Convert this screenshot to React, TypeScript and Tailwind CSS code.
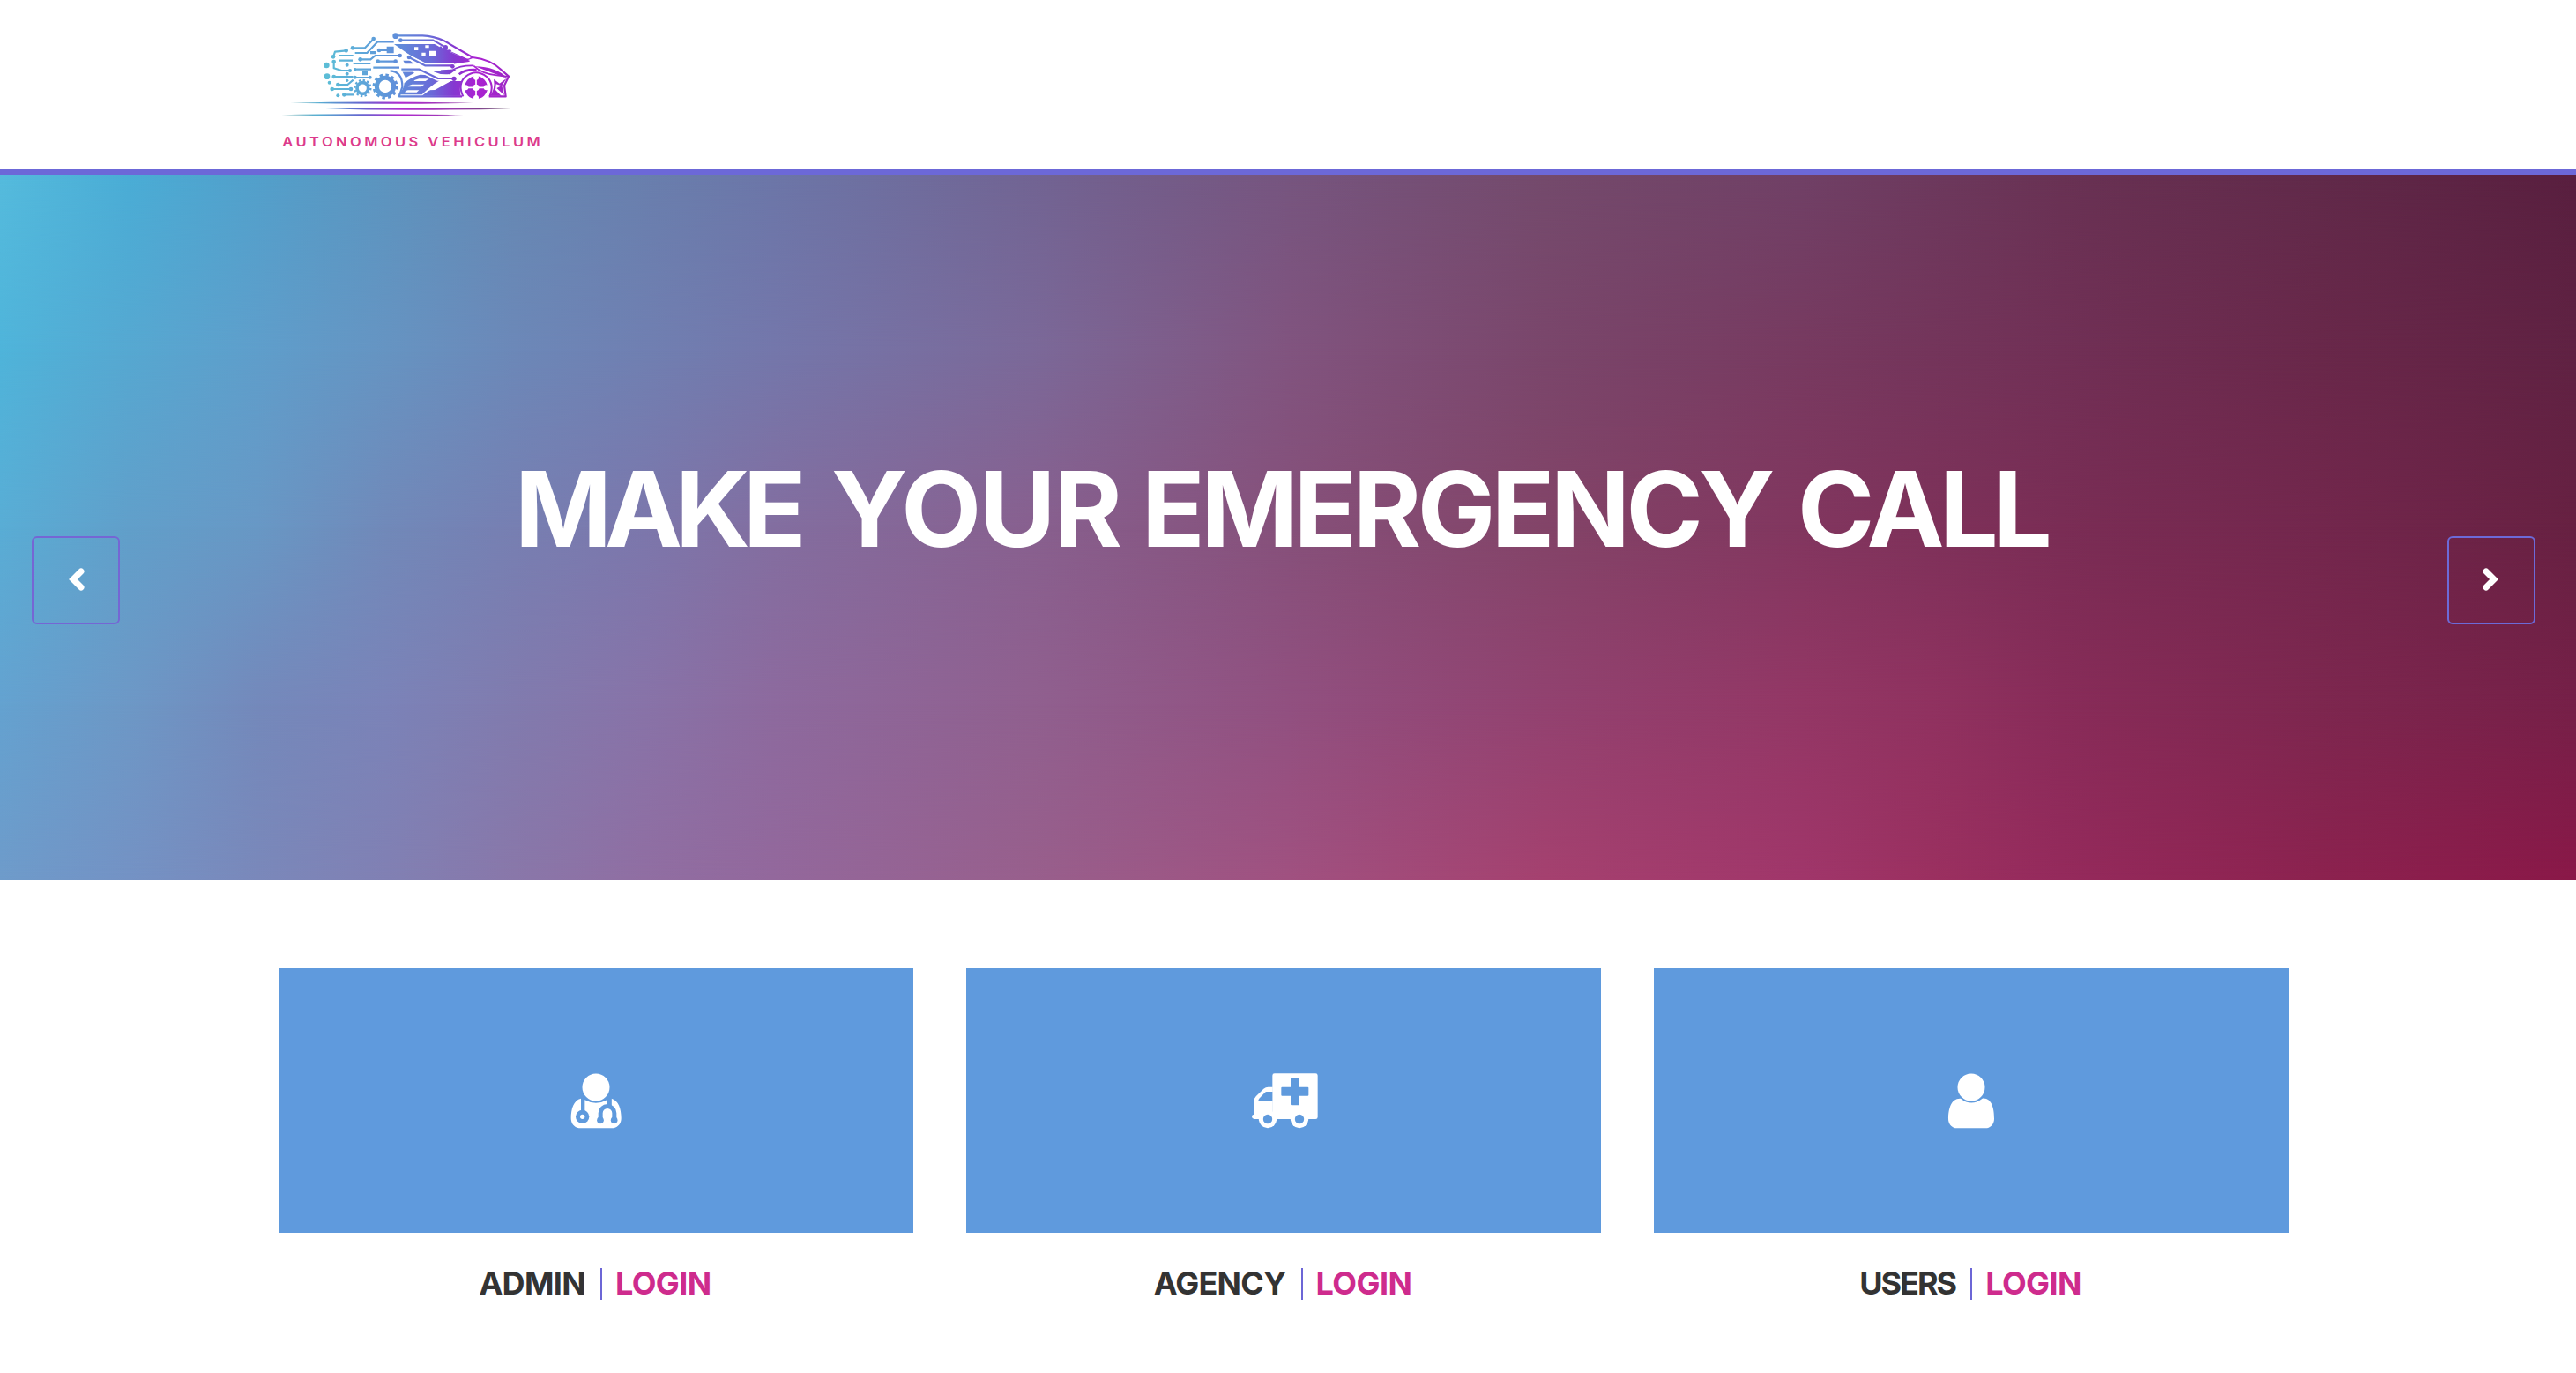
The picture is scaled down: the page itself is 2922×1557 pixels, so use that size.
import React from "react";

function Logo() {
  const g = "url(#car)";
  return (
    <svg width="330" height="172" viewBox="0 0 990 516" role="img" aria-label="Autonomous Vehiculum">
      <defs>
        <linearGradient id="car" gradientUnits="userSpaceOnUse" x1="200" y1="0" x2="835" y2="0">
          <stop offset="0" stopColor="#5cbfd6" />
          <stop offset="0.2" stopColor="#5da8d9" />
          <stop offset="0.4" stopColor="#5f8dda" />
          <stop offset="0.58" stopColor="#6a6ad8" />
          <stop offset="0.7" stopColor="#8538d0" />
          <stop offset="0.82" stopColor="#ab22d2" />
          <stop offset="1" stopColor="#9c26c4" />
        </linearGradient>
        <linearGradient id="speed" gradientUnits="userSpaceOnUse" x1="60" y1="0" x2="840" y2="0">
          <stop offset="0" stopColor="#7fb7b9" />
          <stop offset="0.16" stopColor="#58aed2" />
          <stop offset="0.34" stopColor="#6467cf" />
          <stop offset="0.52" stopColor="#b02bd0" />
          <stop offset="0.75" stopColor="#9a3cae" />
          <stop offset="1" stopColor="#59405f" />
        </linearGradient>
      </defs>
      <g fill={g}>
        <path d="M441 90H592L634 118L690 143Q704 146 696 150L640 158H552L496 128Z" />
        <path d="M472 146H496L508 157H478z" />
        <path d="M468 181H500L510 188L480 205Z" />
        <path d="M476 222Q496 204 530 194L560 196L596 214Q566 232 536 262H456Q474 245 476 222Z" />
        <path d="M560 248L634 216H670Q662 240 668 266H535Z" />
        <path d="M575 184Q610 176 652 177L632 192Q600 196 575 184Z" />
        <path d="M716 166Q790 168 824 204L812 202Q770 186 716 166Z" />
      </g>
      <g fill="none" stroke="#fff" strokeWidth="17" strokeLinejoin="round">
        <path d="M484 131L546 163H645M460 176H527L590 207H650M463 77H574L616 101" />
      </g>
      <g fill="none" stroke={g} strokeWidth="6.5" strokeLinejoin="round">
        <path d="M446 61H538Q575 62 612 79L708 135Q770 142 806 178L831 200L816 231L821 268H764" />
        <path d="M463 77H574L616 101" />
        <path d="M371 73L342 103H300" />
        <path d="M440 82H385L349 120H308" />
        <path d="M278 112L240 116L234 134" />
        <path d="M390 111H420M326 142H361L377 129H461M386 149H450M370 170H459" />
        <path d="M252 129H302M252 146H300M302 156H361M304 176H363" />
        <path d="M236 150V172L262 180H291M236 201H302M308 204H362M250 228H283L302 212M230 243H294M271 262H303" />
        <path d="M492 135L546 163H640M466 176H527L590 207H645" />
        <path d="M428 181Q470 184 469 236L458 268H672" />
        <path d="M600 181L640 178Q664 162 712 163" strokeWidth="5" />
        <path d="M712 164Q740 192 790 196Q816 200 830 200" strokeWidth="5" />
        <path d="M662 193Q684 175 722 178" strokeWidth="8" />
        <path d="M598 98Q606 116 630 112L690 142L708 135" />
      </g>
      <g fill={g}>
        <circle cx="446" cy="62" r="10" />
        <circle cx="463" cy="77" r="7" />
        <circle cx="616" cy="101" r="8" />
        <circle cx="371" cy="72" r="7" />
        <circle cx="300" cy="103" r="7" />
        <circle cx="278" cy="112" r="7" />
        <circle cx="390" cy="111" r="7" />
        <circle cx="234" cy="133" r="7" />
        <circle cx="326" cy="142" r="7" />
        <circle cx="461" cy="129" r="7" />
        <circle cx="386" cy="149" r="7" />
        <circle cx="446" cy="149" r="7" />
        <circle cx="236" cy="150" r="7" />
        <circle cx="211" cy="162" r="10" />
        <circle cx="213" cy="200" r="10" />
        <circle cx="281" cy="161" r="6" />
        <circle cx="281" cy="191" r="6" />
        <circle cx="281" cy="214" r="5" />
        <circle cx="291" cy="180" r="6" />
        <circle cx="236" cy="201" r="7" />
        <circle cx="308" cy="203" r="6" />
        <circle cx="359" cy="203" r="6" />
        <circle cx="221" cy="221" r="6" />
        <circle cx="250" cy="228" r="7" />
        <circle cx="230" cy="243" r="7" />
        <circle cx="294" cy="243" r="7" />
        <circle cx="250" cy="265" r="6" />
        <circle cx="271" cy="262" r="7" />
        <circle cx="308" cy="176" r="5" />
        <circle cx="492" cy="135" r="7" />
        <circle cx="640" cy="166" r="7" />
        <circle cx="645" cy="208" r="8" />
        <path d="M416 98H440V121H416zM360 114H378V124H360zM333 182H351V196H333z" />
        <path d="M780 209L800 224L824 206L808 232L816 264L790 240L806 232L788 226L786 246L806 266H768Q786 240 780 209Z" />
      </g>
      <g fill="#fff">
        <path d="M510 100H523V111H510zM547 94H560V103H547zM535 119H548V130H535zM561 113H585V132H561z" />
        <path d="M638 110L702 135Q696 141 688 139L634 115Z" />
        <path d="M512 212L526 208H560L548 216H508zM492 231L502 227H544L534 235H488zM480 250L488 247H526L518 254H478z" />
        <path d="M556 247L620 210L634 216L580 246Z" />
      </g>
      <g fill="none" stroke={g}>
        <circle cx="411" cy="234" r="29" strokeWidth="15" />
        <circle cx="411" cy="234" r="39" strokeWidth="9" strokeDasharray="10.4 10.02" />
        <circle cx="334" cy="240" r="19" strokeWidth="11" />
        <circle cx="334" cy="240" r="27" strokeWidth="7" strokeDasharray="7.1 7.04" />
      </g>
      <circle cx="720" cy="238" r="52" fill="#fff" />
      <path d="M676 268Q656 226 684 201Q720 172 756 201Q784 226 766 268" fill="none" stroke={g} strokeWidth="6" />
      <circle cx="720" cy="238" r="39" fill={g} />
      <path d="M720 198V278M680 238H760" stroke="#fff" strokeWidth="5" />
      <g fill="#fff">
        <circle cx="720" cy="203" r="9" />
        <circle cx="720" cy="273" r="9" />
        <circle cx="685" cy="238" r="9" />
        <circle cx="755" cy="238" r="9" />
        <circle cx="720" cy="238" r="11" />
      </g>
      <g fill="url(#speed)">
        <path d="M88 290Q240 286 400 286.500T710 290Q560 294 400 293.500T88 290Z" />
        <path d="M208 310Q380 306 520 306.500T840 310.500Q680 314 520 314.500T208 310Z" />
        <path d="M58 331Q200 327.500 360 328T678 331Q520 334.500 360 334.500T58 331Z" />
      </g>
      <text
        transform="translate(61 438) scale(1.15 1)"
        textLength="763"
        lengthAdjust="spacing"
        fill="#dc3a8c"
        fontFamily="Inter, sans-serif"
        fontSize="43"
        fontWeight="600"
      >
        AUTONOMOUS VEHICULUM
      </text>
    </svg>
  );
}

function Person() {
  return (
    <g fill="#fff">
      <circle cx="228" cy="159" r="46.500" />
      <path d="M192 197Q228 226 266 197C298 194 306 232 306 266C306 285 293 298 277 298H179C163 298 150 285 150 266C150 232 160 195 192 197Z" />
    </g>
  );
}

function Doctor() {
  return (
    <g>
      <g fill="#fff">
        <circle cx="228" cy="159" r="46.500" />
        <path d="M177 197L190 202Q228 223 266 202L281 197C305 204 314 232 314 264C314 285 300 298 281 298H176C157 298 143 285 143 264C143 232 152 203 177 197Z" />
      </g>
      <g fill="none" stroke="#5f9add">
        <path d="M183.500 192V245" strokeWidth="13" />
        <path d="M274 192V226" strokeWidth="15" />
        <path d="M243.500 270V247a23.500 23.500 0 0 1 47 0V270" strokeWidth="15" />
      </g>
      <g fill="#5f9add">
        <circle cx="182" cy="259" r="23" />
        <circle cx="243" cy="271" r="11.500" />
        <circle cx="290" cy="271" r="11.500" />
      </g>
      <circle cx="182" cy="259" r="8" fill="#fff" />
    </g>
  );
}

function Ambulance() {
  return (
    <g>
      <g fill="#fff">
        <rect x="190" y="112" width="154" height="155" rx="7" />
        <path d="M191 158H176Q167 158 160 164L134 190Q127 197 127 207V251Q120 252 120 259T128 267H191Z" />
        <circle cx="174" cy="267" r="30.500" />
        <circle cx="282" cy="267" r="30.500" />
      </g>
      <g fill="#5f9add">
        <rect x="252" y="127" width="30" height="93" rx="3" />
        <rect x="220" y="158" width="93" height="30" rx="3" />
        <path d="M190 174H170Q167 174 165 176L145 197Q142 200 142 205H190Z" />
        <circle cx="174" cy="267" r="15.500" />
        <circle cx="282" cy="267" r="15.500" />
      </g>
    </g>
  );
}

function Arrow({ points, label, side }: { points: string; label: string; side: string }) {
  return (
    <button
      aria-label={label}
      className={`absolute top-[410px] size-[100px] rounded-[6px] border-2 ${side}`}
    >
      <svg className="-m-0.5" width="100" height="100" viewBox="0 0 100 100" fill="none">
        <polyline points={points} stroke="#fff" strokeWidth="7" strokeLinecap="round" />
      </svg>
    </button>
  );
}

function Card({ name, icon, nameClass }: { name: string; icon: React.ReactNode; nameClass: string }) {
  return (
    <article className="w-[720px]">
      <div className="flex h-[300px] items-center justify-center bg-[#5f9add]">
        <svg className="mt-0.5" width="160" height="140" viewBox="-12 -3 480 420">
          {icon}
        </svg>
      </div>
      <h2 className="mt-10 flex h-9 items-center justify-center text-[36px] leading-[34px] font-bold">
        <span className={`-mt-0.5 text-[#333] ${nameClass}`}>{name}</span>
        <span className="ml-[17px] h-9 w-0.5 bg-[#6c66d6]" />
        <a className="-mt-0.5 mr-0.5 ml-[15px] tracking-[-0.6px] text-[#ce2b8d]">LOGIN</a>
      </h2>
    </article>
  );
}

export default function App() {
  return (
    <div className="min-h-[1557px] w-[2922px] overflow-hidden bg-white font-['Inter',sans-serif]">
      <header className="h-[198px] border-b-[6px] border-[#6c68d8] pt-5 pl-[300px]">
        <Logo />
      </header>
      <section className="relative h-[800px] bg-[linear-gradient(90deg,#55bbdd_0%,#4aadd6_5%,#52a0cb_10%,#6688b3_20%,#6c76a8_30%,#735f8d_43%,#76557f_50%,#744a6c_60%,#704066_70%,#693254_80%,#612a4a_90%,#591f3f_100%)]">
        <div className="absolute inset-0 bg-[linear-gradient(90deg,#4fb4da_0%,#56a8d1_5%,#5f9ecb_10%,#6694c2_15%,#6c88b8_20%,#7477ab_30%,#7b6999_40%,#81547f_50%,#7a466b_60%,#773a60_70%,#713056_80%,#69284a_90%,#602243_100%)] [mask-image:linear-gradient(180deg,transparent_0%,black_25%)]" />
        <div className="absolute inset-0 bg-[linear-gradient(90deg,#59add5_0%,#619fca_5%,#6898c5_10%,#7189b9_15%,#777fb2_20%,#7c77ac_25%,#836ea0_30%,#88608f_40%,#86507a_50%,#834468_60%,#82365f_70%,#7a2d55_80%,#73274d_90%,#672142_100%)] [mask-image:linear-gradient(180deg,transparent_25%,black_50%)]" />
        <div className="absolute inset-0 bg-[linear-gradient(90deg,#64a2d0_0%,#6d98c6_5%,#7489bb_10%,#7b83b8_15%,#817bae_20%,#8873a8_25%,#8d6a9e_30%,#90608f_40%,#915080_50%,#924270_60%,#933765_70%,#903260_75%,#882c59_80%,#7d274f_90%,#762048_100%)] [mask-image:linear-gradient(180deg,transparent_50%,black_75%)]" />
        <div className="absolute inset-0 bg-[linear-gradient(90deg,#6e9bca_0%,#7492c4_5%,#7a88ba_10%,#8180b3_15%,#8977a9_20%,#906ea2_25%,#93689c_30%,#985f8c_40%,#a05180_50%,#a5416f_60%,#a0366a_70%,#9b3060_75%,#952a5c_80%,#8c224f_90%,#8a1848_100%)] [mask-image:linear-gradient(180deg,transparent_75%,black_100%)]" />
        <h1 className="relative flex h-[439px] pt-[319px] pl-[584px] text-[118px] leading-[120px] font-bold whitespace-nowrap text-white">
          <span className="w-[359px] tracking-[-8px]">MAKE</span>
          <span className="w-[352px] tracking-[-2px]">YOUR</span>
          <span className="w-[744px] tracking-[-4.5px]">EMERGENCY</span>
          <span className="tracking-[-5.6px]">CALL</span>
        </h1>
        <Arrow label="Previous" side="left-9 border-[#7566d4]" points="56,40 47,49 56,58" />
        <Arrow label="Next" side="right-[46px] border-[#6c6ad8]" points="44,40 53,49 44,58" />
      </section>
      <main className="flex gap-[60px] pt-[100px] pl-[316px]">
        <Card name="ADMIN" icon={<Doctor />} nameClass="tracking-[-0.7px]" />
        <Card name="AGENCY" icon={<Ambulance />} nameClass="tracking-[-0.8px]" />
        <Card name="USERS" icon={<Person />} nameClass="tracking-[-2px]" />
      </main>
    </div>
  );
}
